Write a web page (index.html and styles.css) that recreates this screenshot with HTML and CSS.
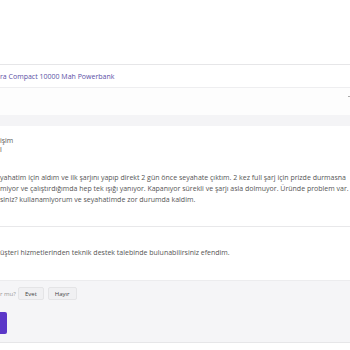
FILE: index.html
```html
<!DOCTYPE html>
<html lang="tr">
<head>
    <meta charset="UTF-8">
    <meta name="viewport" content="width=device-width, initial-scale=1.0">
    <title>Destek Talebi</title>
    <link rel="stylesheet" href="styles.css">
</head>
<body>
    <div class="page">
        <div class="top-space"></div>

        <div class="product-row">
            <span class="product-name">ra Compact 10000 Mah Powerbank</span>
        </div>
        <div class="toolbar">
            <span class="caret"></span>
        </div>

        <div class="band"></div>

        <div class="message">
            <div class="sender">
                <div>işim</div>
                <div>l</div>
            </div>
            <p class="message-text">yahatim için aldım ve ilk şarjını yapıp direkt 2 gün önce seyahate çıktım. 2 kez full şarj için prizde durmasna<br>miyor ve çalıştırdığımda hep tek ışığı yanıyor. Kapanıyor sürekli ve şarjı asla dolmuyor. Üründe problem var.<br>siniz? kullanamiyorum ve seyahatimde zor durumda kaldim.</p>
        </div>

        <div class="reply">
            <p class="reply-text">üşteri hizmetlerinden teknik destek talebinde bulunabilirsiniz efendim.</p>
        </div>

        <div class="feedback">
            <div class="vote">
                <span class="vote-label">r mu?</span>
                <button class="vote-btn">Evet</button>
                <button class="vote-btn">Hayır</button>
            </div>
            <button class="primary-btn"></button>
        </div>
    </div>
</body>
</html>
```

FILE: styles.css
```css
body {
    margin: 0;
    font-family: "Open Sans", "DejaVu Sans", sans-serif;
    background: #ffffff;
    color: #555;
}

.page {
    width: 350px;
}

.top-space {
    height: 64px;
}

.product-row {
    height: 22px;
    display: flex;
    align-items: center;
    border-top: 1px solid #e6e6e8;
    border-bottom: 1px solid #eeeef0;
}

.product-name {
    font-size: 7px;
    color: #5b4fa6;
}

.toolbar {
    height: 27px;
    position: relative;
    background: #fdfdfd;
}

.caret {
    position: absolute;
    right: 0;
    top: 8px;
    width: 2px;
    height: 2px;
    border-top: 1px solid #aaa;
}

.band {
    height: 11px;
    background: #f4f4f6;
}

.message {
    padding: 10px 0 0;
    border-bottom: 1px solid #e8e8ea;
    height: 90px;
}

.sender {
    font-size: 7px;
    line-height: 9px;
    color: #555;
}

.message-text {
    margin: 18px 0 0;
    font-size: 7px;
    line-height: 11px;
    color: #555;
    white-space: nowrap;
}

.reply {
    height: 53px;
}

.reply-text {
    margin: 0;
    padding-top: 21px;
    font-size: 7px;
    line-height: 10px;
    color: #555;
}

.feedback {
    background: #f5f5f7;
    height: 63px;
    border-top: 1px solid #ececee;
    border-bottom: 1px solid #e6e6e8;
    padding-top: 6px;
    box-sizing: border-box;
}

.vote {
    display: flex;
    align-items: center;
    gap: 4px;
}

.vote-label {
    font-size: 6px;
    color: #999;
    white-space: nowrap;
    width: 14px;
}

.vote-btn {
    font-family: inherit;
    font-size: 6px;
    color: #444;
    height: 13px;
    padding: 0 6px;
    background: #f0f0f2;
    border: 1px solid #e4e4e6;
    border-radius: 2px;
}

.primary-btn {
    display: block;
    margin-top: 12px;
    width: 7px;
    height: 22px;
    border: none;
    padding: 0;
    background: #5b37c8;
    border-radius: 0 2px 2px 0;
}
```
